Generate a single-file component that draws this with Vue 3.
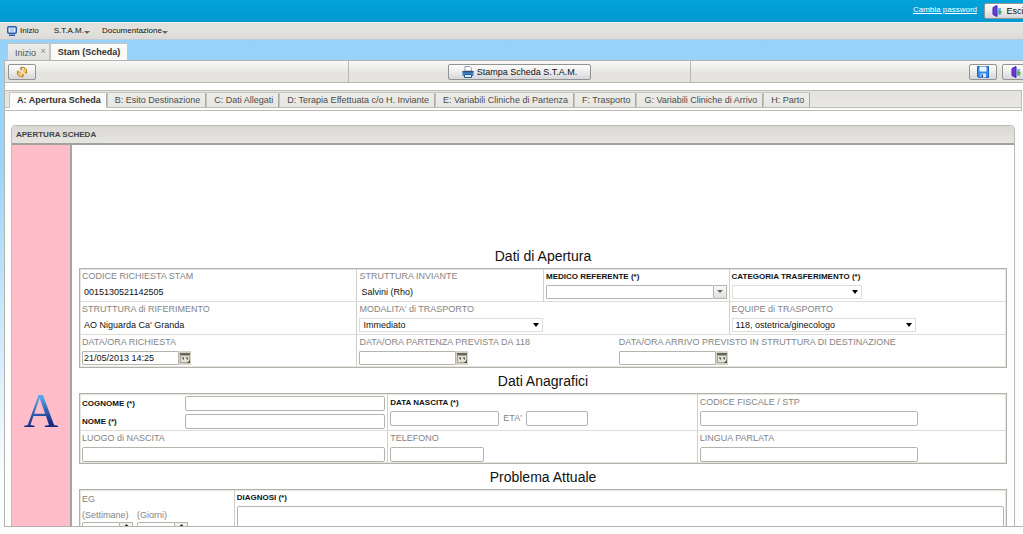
<script setup>
import { ref } from 'vue'

const menu = [
  { label: 'S.T.A.M.' },
  { label: 'Documentazione' },
]
const sections = [
  'A: Apertura Scheda',
  'B: Esito Destinazione',
  'C: Dati Allegati',
  'D: Terapia Effettuata c/o H. Inviante',
  'E: Variabili Cliniche di Partenza',
  'F: Trasporto',
  'G: Variabili Cliniche di Arrivo',
  'H: Parto',
]
const active = ref(0)

const form = ref({
  medico: '',
  categoria: '',
  modalita: 'Immediato',
  equipe: '118, ostetrica/ginecologo',
  richiesta: '21/05/2013 14:25',
  partenza: '',
  arrivo: '',
  settimane: '0',
  giorni: '0',
})
</script>

<template>
  <div class="page">
    <header class="top">
      <a href="#" class="pwd">Cambia password</a>
      <button type="button" class="btn esci">
        <svg width="12" height="12" viewBox="0 0 12 12">
          <path d="M7 3h3v7H7z" fill="#7fb8ee" />
          <path d="M2 2.5 6 0.5v11L2 9.5z" fill="#6a3be0" stroke="#4420a8" />
          <path d="M7 6.5 9 4.5v1.5h1.5v2.5H9V10z" fill="#4fae4a" />
        </svg>
        Esci
      </button>
    </header>

    <nav class="menu">
      <a href="#" class="home">
        <svg width="10" height="10" viewBox="0 0 10 10">
          <rect x="0.75" y="0.75" width="8.5" height="6.5" rx="1" fill="#e4f0ff" stroke="#2a5caa" stroke-width="1.5" />
          <path d="M3 3h4M3 5h4" stroke="#7fa6dc" />
          <path d="M2 9.25h6" stroke="#2a5caa" stroke-width="1.5" />
        </svg>
        Inizio
      </a>
      <a v-for="m in menu" :key="m.label" href="#">
        {{ m.label }}<i class="caret"></i>
      </a>
    </nav>

    <div class="workspace">
      <div class="doc-tabs">
        <button type="button" class="doc-tab">Inizio <span class="close">×</span></button>
        <button type="button" class="doc-tab on">Stam (Scheda)</button>
      </div>

      <main class="frame">
        <div class="toolbar">
          <div class="cell">
            <button type="button" class="btn icon" aria-label="Aggiorna">
              <svg width="12" height="12" viewBox="0 0 12 12" fill="none" stroke="#c98a12" stroke-width="1.2">
                <path d="M5.5 4.5V1.5L4 3M5.5 1.5h2.5l2.5 2.5v3.5M10.5 7.5 9 6M6.5 7.5v3L8 9M6.5 10.5H4L1.5 8V5M1.5 5 3 6.5" />
                <path d="M8 3.5v3M4 5.5v3" stroke="#f3c14b" stroke-width="2" />
              </svg>
            </button>
          </div>
          <div class="cell mid">
            <button type="button" class="btn print">
              <svg width="12" height="12" viewBox="0 0 12 12">
                <path d="M3 5V0.5h4.5L9.5 2.5V5z" fill="#fff" stroke="#8c9cae" />
                <path d="M0.5 5h11v5h-11z" fill="#3d86cf" />
                <path d="M0.5 5h11v1.5h-11z" fill="#34506e" />
                <path d="M2.5 8.5h7V11.5h-7z" fill="#d8ebfa" stroke="#2a5c94" />
              </svg>
              Stampa Scheda S.T.A.M.
            </button>
          </div>
          <div class="cell end">
            <button type="button" class="btn icon" aria-label="Salva">
              <svg width="12" height="12" viewBox="0 0 12 12">
                <path d="M0.5 0.5h11v11h-10l-1-1z" fill="#2f8df0" stroke="#1c5fc0" />
                <path d="M2.5 0.5h7v5h-7z" fill="#eef6ff" />
                <path d="M3.5 7.5h5.5v4H3.5z" fill="#dbe6f2" />
                <path d="M4.5 8.5h1.5v3H4.5z" fill="#23406e" />
              </svg>
            </button>
            <button type="button" class="btn icon" aria-label="Esci dalla scheda">
              <svg width="12" height="12" viewBox="0 0 12 12">
                <path d="M7 3h3v7H7z" fill="#7fb8ee" />
                <path d="M2 2.5 6 0.5v11L2 9.5z" fill="#6a3be0" stroke="#4420a8" />
                <path d="M7 6.5 9 4.5v1.5h1.5v2.5H9V10z" fill="#4fae4a" />
              </svg>
            </button>
          </div>
        </div>

        <div class="tabs">
          <button
            v-for="(s, i) in sections"
            :key="s"
            type="button"
            class="tab"
            :class="{ on: i === active }"
            @click="active = i"
          >{{ s }}</button>
        </div>

        <section class="panel">
          <h1>APERTURA SCHEDA</h1>
          <div class="panel-body">
            <aside><span class="letter">A</span></aside>
            <form class="content">
              <h2>Dati di Apertura</h2>
              <div class="box">
                <div class="row four">
                  <div class="col">
                    <span class="lbl">CODICE RICHIESTA STAM</span>
                    <span class="val">0015130521142505</span>
                  </div>
                  <div class="col">
                    <span class="lbl">STRUTTURA INVIANTE</span>
                    <span class="val">Salvini (Rho)</span>
                  </div>
                  <div class="col">
                    <label class="req" for="medico">MEDICO REFERENTE (*)</label>
                    <div class="combo">
                      <input id="medico" v-model="form.medico" type="text" />
                      <button type="button" aria-label="Apri elenco medici"><i class="caret"></i></button>
                    </div>
                  </div>
                  <div class="col">
                    <label class="req" for="categoria">CATEGORIA TRASFERIMENTO (*)</label>
                    <select id="categoria" v-model="form.categoria" class="w-s">
                      <option value=""></option>
                    </select>
                  </div>
                </div>
                <div class="row three">
                  <div class="col">
                    <span class="lbl">STRUTTURA di RIFERIMENTO</span>
                    <span class="val">AO Niguarda Ca' Granda</span>
                  </div>
                  <div class="col">
                    <label class="lbl" for="modalita">MODALITA' di TRASPORTO</label>
                    <select id="modalita" v-model="form.modalita" class="w-m">
                      <option>Immediato</option>
                    </select>
                  </div>
                  <div class="col">
                    <label class="lbl" for="equipe">EQUIPE di TRASPORTO</label>
                    <select id="equipe" v-model="form.equipe" class="w-m">
                      <option>118, ostetrica/ginecologo</option>
                    </select>
                  </div>
                </div>
                <div class="row dates">
                  <div class="col">
                    <label class="lbl" for="richiesta">DATA/ORA RICHIESTA</label>
                    <div class="date">
                      <input id="richiesta" v-model="form.richiesta" type="text" />
                      <button type="button" aria-label="Calendario richiesta">
                        <svg width="12" height="14" viewBox="0 0 12 14"><path d="M0 0h12v14H0z" fill="#d6d3c6" /><path d="M1 2h10v2H1z" fill="#66665c" /><path d="M1.5 4.5h9v7h-9z" fill="#e4e2d6" stroke="#a5a498" /><path d="M3 7h2M7 7h2M4 8h1M8 8h1" stroke="#33332c" /><path d="M8 12h3V9z" fill="#4a4a42" /></svg>
                      </button>
                    </div>
                  </div>
                  <div class="col">
                    <label class="lbl" for="partenza">DATA/ORA PARTENZA PREVISTA DA 118</label>
                    <div class="date">
                      <input id="partenza" v-model="form.partenza" type="text" />
                      <button type="button" aria-label="Calendario partenza">
                        <svg width="12" height="14" viewBox="0 0 12 14"><path d="M0 0h12v14H0z" fill="#d6d3c6" /><path d="M1 2h10v2H1z" fill="#66665c" /><path d="M1.5 4.5h9v7h-9z" fill="#e4e2d6" stroke="#a5a498" /><path d="M3 7h2M7 7h2M4 8h1M8 8h1" stroke="#33332c" /><path d="M8 12h3V9z" fill="#4a4a42" /></svg>
                      </button>
                    </div>
                  </div>
                  <div class="col open">
                    <label class="lbl" for="arrivo">DATA/ORA ARRIVO PREVISTO IN STRUTTURA DI DESTINAZIONE</label>
                    <div class="date">
                      <input id="arrivo" v-model="form.arrivo" type="text" />
                      <button type="button" aria-label="Calendario arrivo">
                        <svg width="12" height="14" viewBox="0 0 12 14"><path d="M0 0h12v14H0z" fill="#d6d3c6" /><path d="M1 2h10v2H1z" fill="#66665c" /><path d="M1.5 4.5h9v7h-9z" fill="#e4e2d6" stroke="#a5a498" /><path d="M3 7h2M7 7h2M4 8h1M8 8h1" stroke="#33332c" /><path d="M8 12h3V9z" fill="#4a4a42" /></svg>
                      </button>
                    </div>
                  </div>
                </div>
              </div>

              <h2>Dati Anagrafici</h2>
              <div class="box">
                <div class="row person">
                  <div class="col names">
                    <label class="req" for="cognome">COGNOME (*)</label>
                    <input id="cognome" type="text" />
                    <label class="req" for="nome">NOME (*)</label>
                    <input id="nome" type="text" />
                  </div>
                  <div class="col birth">
                    <label class="req" for="nascita">DATA NASCITA (*)</label>
                    <div class="line">
                      <input id="nascita" type="text" class="w-date" />
                      <label class="lbl" for="eta">ETA'</label>
                      <input id="eta" type="text" class="w-age" />
                    </div>
                  </div>
                  <div class="col birth">
                    <label class="lbl" for="cf">CODICE FISCALE / STP</label>
                    <input id="cf" type="text" class="w-l" />
                  </div>
                </div>
                <div class="row person">
                  <div class="col">
                    <label class="lbl" for="luogo">LUOGO di NASCITA</label>
                    <input id="luogo" type="text" />
                  </div>
                  <div class="col">
                    <label class="lbl" for="telefono">TELEFONO</label>
                    <input id="telefono" type="text" class="w-tel" />
                  </div>
                  <div class="col">
                    <label class="lbl" for="lingua">LINGUA PARLATA</label>
                    <input id="lingua" type="text" class="w-l" />
                  </div>
                </div>
              </div>

              <h2>Problema Attuale</h2>
              <div class="box">
                <div class="row problem">
                  <div class="col eg">
                    <span class="lbl">EG</span>
                    <div class="weeks">
                      <div>
                        <label class="lbl" for="settimane">(Settimane)</label>
                        <div class="spin">
                          <input id="settimane" v-model="form.settimane" type="text" />
                          <button type="button" aria-label="Aumenta settimane"><svg width="7" height="4" viewBox="0 0 7 4"><path d="M0 4 3.5 0 7 4z" fill="#222" /></svg></button>
                        </div>
                      </div>
                      <div>
                        <label class="lbl" for="giorni">(Giorni)</label>
                        <div class="spin">
                          <input id="giorni" v-model="form.giorni" type="text" />
                          <button type="button" aria-label="Aumenta giorni"><svg width="7" height="4" viewBox="0 0 7 4"><path d="M0 4 3.5 0 7 4z" fill="#222" /></svg></button>
                        </div>
                      </div>
                    </div>
                  </div>
                  <div class="col">
                    <label class="req" for="diagnosi">DIAGNOSI (*)</label>
                    <textarea id="diagnosi" rows="4"></textarea>
                  </div>
                </div>
              </div>
            </form>
          </div>
        </section>
      </main>
    </div>
  </div>
</template>

<style>
body {
  margin: 0;
  background: #fefefe;
}
</style>

<style scoped>
.page,
.page * {
  box-sizing: border-box;
}
.page {
  display: flex;
  flex-direction: column;
  height: 100vh;
  padding-bottom: 7px;
  overflow: hidden;
  font-family: "Liberation Sans", Arial, sans-serif;
  font-size: 9px;
  line-height: 12px;
  color: #111;
}
button,
input,
select,
textarea {
  font: inherit;
  color: inherit;
  margin: 0;
  padding: 0;
}
svg {
  display: block;
  flex: none;
}

.top {
  flex: none;
  display: flex;
  align-items: flex-start;
  justify-content: flex-end;
  gap: 7px;
  height: 22px;
  margin-right: -8px;
  background: linear-gradient(#02a4da, #0099d0);
}
.pwd {
  margin-top: 4px;
  color: #fff;
  font-size: 8px;
}
.btn {
  display: flex;
  align-items: center;
  justify-content: center;
  gap: 3px;
  height: 16px;
  border: 1px solid #93938f;
  border-radius: 2px;
  background: linear-gradient(#fdfdfd, #ececec 50%, #d6d6dc);
}
.esci {
  width: 47px;
  margin-top: 3px;
}

.menu {
  flex: none;
  display: flex;
  align-items: center;
  gap: 12px;
  height: 18px;
  padding: 0 7px;
  border-top: 1px solid #eef4f6;
  border-bottom: 1px solid #b9cdd8;
  background: linear-gradient(#e2dfdf, #e2e3dc 50%, #ddd9d9);
  font-size: 8px;
}
.menu a {
  display: flex;
  align-items: center;
  color: #111;
  text-decoration: none;
}
.menu .home {
  gap: 3px;
  margin-right: 3px;
}
.caret {
  border: 3px solid transparent;
  border-top-color: #666;
  border-bottom: 0;
}
.menu .caret {
  margin-top: 2px;
}

.workspace {
  flex: 1;
  min-height: 0;
  display: flex;
  flex-direction: column;
  padding-left: 4px;
  background: linear-gradient(#97d2f9, #9ad4f9 25%, #fbfdff 90%);
}
.doc-tabs {
  flex: none;
  display: flex;
  align-items: flex-end;
  height: 20px;
  padding-left: 3px;
}
.doc-tab {
  height: 17px;
  padding: 0 3px 0 7px;
  border: 1px solid #c3c5c2;
  border-bottom: 0;
  border-radius: 2px 2px 0 0;
  background: linear-gradient(#eeeeeb, #dededa);
  color: #555;
}
.doc-tab.on {
  padding: 0 7px;
  background: #fafaf8;
  font-weight: bold;
  color: #333;
}
.close {
  margin-left: 2px;
  color: #888;
  vertical-align: 2px;
}

.frame {
  flex: 1;
  min-height: 0;
  overflow: hidden;
  border: 1px solid #b4b4ae;
  border-right: 0;
  background: #fefefe;
}
.toolbar {
  display: grid;
  grid-template-columns: repeat(3, 1fr);
  height: 22px;
  margin-right: -10px;
  border-bottom: 1px solid #b9b8b3;
  background: linear-gradient(#f8f8f7, #e4e3df 60%, #e4e3df);
}
.cell {
  display: flex;
  align-items: center;
  gap: 5px;
  padding: 0 3px;
}
.cell + .cell {
  border-left: 1px solid #b9b8b3;
}
.cell.mid {
  justify-content: center;
}
.cell.end {
  justify-content: flex-end;
}
.icon {
  width: 28px;
}
.print {
  width: 143px;
}

.tabs {
  display: flex;
  align-items: flex-end;
  height: 21px;
  margin: 7px 1px 14px 0;
  padding: 0 0 2px 4px;
  border: 1px solid #bdbcb7;
  border-left: 0;
  background: linear-gradient(#e3e2de, #e9e8e4 17px, #fdfdfd 17px);
  box-shadow: inset 0 -2px 0 #fdfdfd, inset 0 -3px 0 #bdbcb7;
}
.tab {
  height: 16px;
  padding: 0 5px 0 7px;
  border: 1px solid #c4c3be;
  border-right-color: #aaa9a4;
  border-bottom-color: #bdbcb7;
  border-radius: 2px 2px 0 0;
  background: linear-gradient(#ededea, #e6e5e1);
  color: #4c4c4c;
  white-space: nowrap;
}
.tab.on {
  border-bottom-color: #fdfdfd;
  background: #fbfbf9;
  font-weight: bold;
  color: #333;
}

.panel {
  margin: 0 8px 0 6px;
  border: 1px solid #bab9b4;
  border-radius: 4px 4px 0 0;
}
h1,
h2 {
  margin: 0;
}
h1 {
  height: 19px;
  padding-left: 4px;
  border-bottom: 2px solid #a3a39e;
  border-radius: 3px 3px 0 0;
  background: linear-gradient(#d9d8d4, #e6e5e1);
  color: #444;
  font-size: 8px;
  line-height: 18px;
}
.panel-body {
  display: flex;
  min-height: 532px;
}
aside {
  flex: none;
  display: flex;
  align-items: center;
  justify-content: center;
  width: 60px;
  border-right: 2px solid #a8a3a3;
  background: #ffbdca;
}
.letter {
  background: linear-gradient(170deg, #5aa6e6 25%, #2f66b6 50%, #182c84 75%);
  background-clip: text;
  -webkit-background-clip: text;
  color: transparent;
  font-family: "Liberation Serif", serif;
  font-size: 48px;
  line-height: 48px;
}

.content {
  flex: 1;
  min-width: 0;
  padding: 98px 7px 0;
}
h2 {
  height: 25px;
  font-size: 14px;
  font-weight: normal;
  line-height: 27px;
  text-align: center;
}
.box {
  border: 1px solid #b2b2ac;
  box-shadow: inset 0 0 0 1px #e6e5e0;
}
.row {
  display: grid;
}
.row + .row {
  border-top: 1px solid #dcdcd8;
}
.four {
  grid-template-columns: 277fr 187fr 186fr 278fr;
}
.three {
  grid-template-columns: 277fr 373fr 278fr;
}
.dates {
  grid-template-columns: 277fr 260fr 391fr;
}
.person {
  grid-template-columns: 308fr 310fr 310fr;
}
.problem {
  grid-template-columns: 154fr 774fr;
}
.col {
  display: flex;
  flex-direction: column;
  align-items: flex-start;
  min-width: 0;
  padding: 0 2px 2px;
}
.person .col {
  padding-bottom: 1px;
}
.col + .col {
  border-left: 1px solid #d0d0cb;
}
.col.open {
  border-left-color: transparent;
}
.lbl,
.req {
  margin-bottom: 1px;
  line-height: 15px;
  white-space: nowrap;
}
.lbl {
  color: #858585;
}
.req {
  font-size: 8px;
  font-weight: bold;
}
.val {
  padding-left: 2px;
  line-height: 14px;
}
input,
textarea {
  width: 100%;
  height: 15px;
  padding: 0 2px;
  border: 1px solid #b4b4ae;
  border-radius: 2px;
  background: #fff;
}
select {
  height: 14px;
  padding: 0 16px 0 3px;
  border: 1px solid #deded9;
  border-radius: 0;
  appearance: none;
  background: url("data:image/svg+xml,%3Csvg xmlns='http://www.w3.org/2000/svg' width='6' height='4'%3E%3Cpath d='M0 0h6L3 4z'/%3E%3C/svg%3E") no-repeat right 3px center #fff;
  line-height: 12px;
}
.w-s {
  width: 130px;
}
.w-m {
  width: 184px;
}
.w-l {
  width: 218px;
}
.w-date {
  width: 109px;
}
.w-age {
  width: 62px;
}
.w-tel {
  width: 94px;
}
.combo,
.date,
.spin {
  display: flex;
}
.combo {
  width: 100%;
}
.combo input,
.date input {
  height: 14px;
  border-radius: 1px;
}
.combo button {
  flex: none;
  display: flex;
  justify-content: center;
  width: 13px;
  height: 14px;
  padding-top: 4px;
  border: 1px solid #b4b4ae;
  border-left: 0;
  background: linear-gradient(#fbfbfa, #dfdeda);
}
.date input {
  width: 97px;
  padding: 0 1px;
}
.date button {
  width: 12px;
  height: 14px;
  border: 0;
}
.person .names {
  display: grid;
  grid-template-columns: 104fr 201fr;
  grid-auto-rows: 18px;
  align-items: center;
  padding-bottom: 0;
}
.names .req {
  margin: 0;
}
.birth {
  padding-top: 1px;
}
.line {
  display: flex;
  gap: 4px;
}
.line .lbl {
  margin: 0;
}
.eg {
  padding-top: 2px;
}
.weeks {
  display: flex;
  gap: 4px;
}
.weeks .lbl {
  display: block;
  margin: 0;
  line-height: 14px;
}
.spin input {
  width: 38px;
  height: 14px;
  border-radius: 2px 0 0 2px;
}
.spin button {
  display: flex;
  justify-content: center;
  width: 13px;
  height: 14px;
  padding-top: 1px;
  border: 1px solid #b4b4ae;
  border-left: 0;
  background: #f2f2ef;
}
textarea {
  height: 60px;
}
</style>
